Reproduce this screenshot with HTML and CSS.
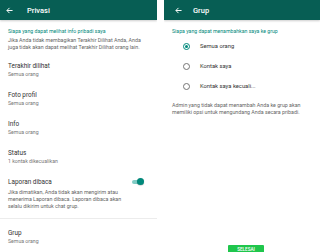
FILE: index.html
```html
<!DOCTYPE html>
<html lang="id">

<head>
    <meta charset="UTF-8">
    <meta name="viewport" content="width=device-width, initial-scale=1.0">
    <title>Privasi dan Grup</title>
    <link rel="stylesheet" href="styles.css">
</head>

<body>
    <!-- Layar Privasi -->
    <div class="screen screen-left">
        <div class="app-bar">
            <svg class="back" viewBox="0 0 8 8" width="7" height="7">
                <path d="M7.5 4H1.2M4 1L1 4l3 3" fill="none" stroke="#fff" stroke-width="1.1" />
            </svg>
            <span class="app-title">Privasi</span>
        </div>

        <div class="content">
            <p class="section-label">Siapa yang dapat melihat info pribadi saya</p>
            <p class="note">Jika Anda tidak membagikan Terakhir Dilihat Anda, Anda juga tidak akan dapat melihat Terakhir Dilihat orang lain.</p>

            <div class="item">
                <div class="item-title">Terakhir dilihat</div>
                <div class="item-sub">Semua orang</div>
            </div>
            <div class="item">
                <div class="item-title">Foto profil</div>
                <div class="item-sub">Semua orang</div>
            </div>
            <div class="item">
                <div class="item-title">Info</div>
                <div class="item-sub">Semua orang</div>
            </div>
            <div class="item">
                <div class="item-title">Status</div>
                <div class="item-sub">1 kontak dikecualikan</div>
            </div>
            <div class="item item-toggle">
                <div class="toggle-row">
                    <div class="item-title">Laporan dibaca</div>
                    <span class="switch"><span class="knob"></span></span>
                </div>
                <p class="note">Jika dimatikan, Anda tidak akan mengirim atau menerima Laporan dibaca. Laporan dibaca akan selalu dikirim untuk chat grup.</p>
            </div>
        </div>

        <div class="divider"></div>

        <div class="content">
            <div class="item">
                <div class="item-title">Grup</div>
                <div class="item-sub">Semua orang</div>
            </div>
        </div>
    </div>

    <!-- Layar Grup -->
    <div class="screen screen-right">
        <div class="app-bar">
            <svg class="back" viewBox="0 0 8 8" width="7" height="7">
                <path d="M7.5 4H1.2M4 1L1 4l3 3" fill="none" stroke="#fff" stroke-width="1.1" />
            </svg>
            <span class="app-title">Grup</span>
        </div>

        <div class="content">
            <p class="section-label">Siapa yang dapat menambahkan saya ke grup</p>

            <div class="options">
                <label class="option"><span class="radio checked"></span>Semua orang</label>
                <label class="option"><span class="radio"></span>Kontak saya</label>
                <label class="option"><span class="radio"></span>Kontak saya kecuali...</label>
            </div>

            <p class="note">Admin yang tidak dapat menambah Anda ke grup akan memiliki opsi untuk mengundang Anda secara pribadi.</p>
        </div>

        <button class="done">SELESAI</button>
    </div>
</body>

</html>
```

FILE: styles.css
```css
/* Estilos generales */
body {
    font-family: Roboto, 'Noto Sans', sans-serif;
    background-color: #fff;
    margin: 0;
    padding: 0;
    display: flex;
    gap: 7px;
    height: 252px;
    overflow: hidden;
}

.screen {
    display: flex;
    flex-direction: column;
    height: 252px;
    overflow: hidden;
}

.screen-left {
    width: 157px;
}

.screen-right {
    width: 156px;
}

/* Barra superior */
.app-bar {
    height: 20px;
    background-color: #075e54;
    display: flex;
    align-items: center;
    padding-left: 6px;
    box-shadow: 0 1px 2px rgba(0, 0, 0, 0.2);
    flex-shrink: 0;
}

.screen-right .app-bar {
    padding-left: 11px;
}

.back {
    display: block;
}

.app-title {
    color: #fff;
    font-size: 7.5px;
    font-weight: 500;
    margin-left: 14px;
}

.screen-right .app-title {
    margin-left: 11px;
}

.content {
    padding: 0 8px;
}

.section-label {
    color: #00897b;
    font-size: 5.2px;
    line-height: 7px;
    margin: 8px 0 0;
}

.note {
    color: #666;
    font-size: 5.3px;
    line-height: 7px;
    margin: 1.5px 0 0;
}

/* Elementos de la lista */
.item {
    padding: 6.5px 0;
}

.content .note + .item {
    margin-top: 4.5px;
}

.item-title {
    color: #333;
    font-size: 6.4px;
    line-height: 8px;
    margin-bottom: 1px;
}

.item-sub {
    color: #777;
    font-size: 5.2px;
    line-height: 7px;
}

.item-toggle {
    padding-bottom: 8.5px;
}

.item-toggle .note {
    margin-top: 2px;
    max-width: 120px;
}

.toggle-row {
    display: flex;
    align-items: center;
    justify-content: space-between;
    padding-right: 6px;
}

.switch {
    width: 11px;
    height: 4.5px;
    border-radius: 3px;
    background-color: #80cbc4;
    position: relative;
}

.knob {
    position: absolute;
    right: -1px;
    top: -1.5px;
    width: 7px;
    height: 7px;
    border-radius: 50%;
    background-color: #00897b;
    box-shadow: 0 0.5px 1px rgba(0, 0, 0, 0.3);
}

.divider {
    height: 1px;
    background-color: #ececec;
    margin-bottom: 3px;
}

/* Opciones de grupo */
.options {
    display: flex;
    flex-direction: column;
    margin-top: 1px;
}

.option {
    display: flex;
    align-items: center;
    height: 20px;
    font-size: 5.8px;
    color: #333;
    padding-left: 11px;
}

.radio {
    width: 5px;
    height: 5px;
    border: 1px solid #757575;
    border-radius: 50%;
    margin-right: 10px;
    position: relative;
}

.radio.checked {
    border-color: #00897b;
}

.radio.checked::after {
    content: "";
    position: absolute;
    left: 1px;
    top: 1px;
    width: 3px;
    height: 3px;
    border-radius: 50%;
    background-color: #00897b;
}

.options + .note {
    margin-top: 5.5px;
}

/* Botón */
.done {
    margin-top: auto;
    margin-bottom: -7px;
    margin-left: 64px;
    width: 36px;
    height: 14px;
    border: none;
    border-radius: 1px;
    background-color: #1fc64c;
    color: #fff;
    font-family: Roboto, sans-serif;
    font-size: 4.6px;
    font-weight: 500;
    padding: 0 0 5px;
    flex-shrink: 0;
}
```
